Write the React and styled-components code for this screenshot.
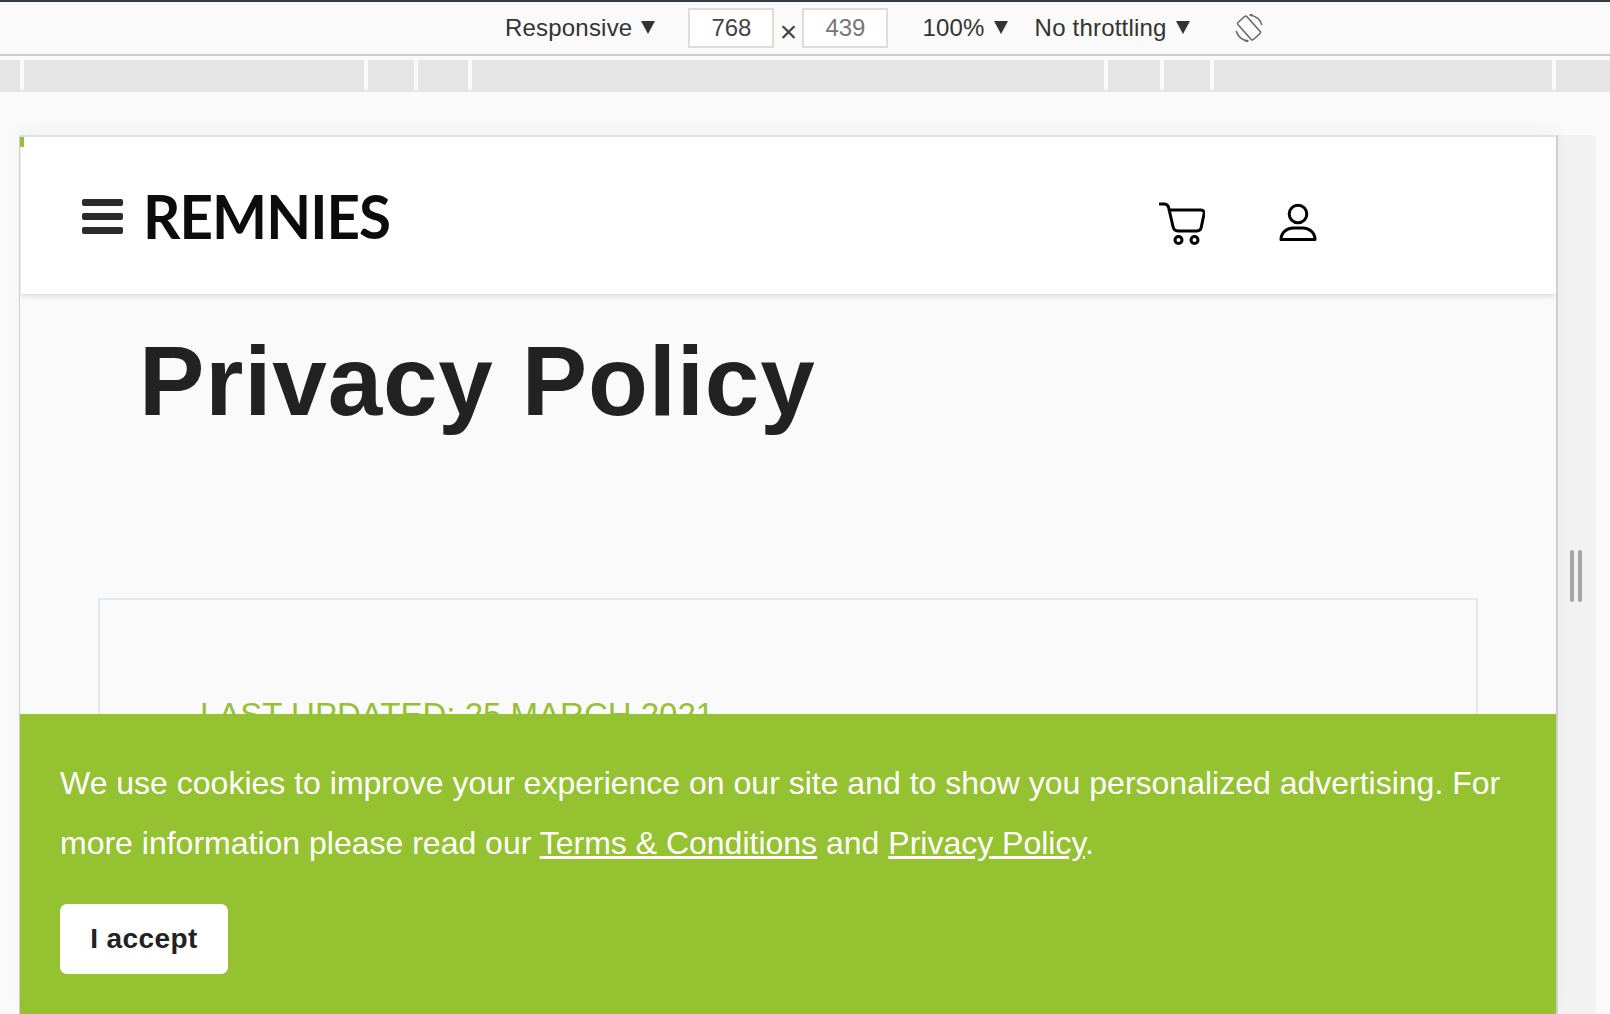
import styled, { createGlobalStyle } from "styled-components";

const GlobalStyle = createGlobalStyle`
  html, body {
    margin: 0;
    padding: 0;
    height: 100%;
    overflow: hidden;
    background: #fafafa;
    font-family: "Liberation Sans", Arial, sans-serif;
  }
`;

const Page = styled.div`
  height: 1014px;
  overflow: hidden;
  background: #fafafa;
  border-top: 2px solid #2f3c46;
  box-sizing: border-box;
`;

const Toolbar = styled.div`
  height: 52px;
  display: flex;
  align-items: center;
  padding-left: 505px;
  border-bottom: 2px solid #cccccc;
  box-sizing: content-box;
  color: #333;
  font-size: 24px;
`;

const Select = styled.div`
  display: flex;
  align-items: center;
  gap: 9px;
  margin-left: ${(props) => props.$before}px;
  margin-right: ${(props) => props.$gap}px;
  white-space: nowrap;
  letter-spacing: 0.2px;
`;

const Caret = styled.span`
  width: 0;
  height: 0;
  border-left: 7px solid transparent;
  border-right: 7px solid transparent;
  border-top: 13px solid #333;
  margin-top: -1px;
`;

const SizeInput = styled.div`
  width: 82px;
  height: 36px;
  border: 2px solid #dddddd;
  background: #fff;
  color: ${(props) => props.$color};
  display: flex;
  align-items: center;
  justify-content: center;
  font-size: 24px;
`;

const Times = styled.span`
  width: 28px;
  text-align: center;
  font-size: 30px;
  line-height: 1;
  color: #444;
  margin-top: 8px;
`;

const Ruler = styled.div`
  height: 32px;
  margin-top: 4px;
  display: flex;
  background: #e5e5e5;
`;

const RulerTick = styled.span`
  width: 4px;
  height: 30px;
  background: #fafafa;
  margin-left: ${(props) => props.$offset}px;
`;

const Stage = styled.div`
  display: flex;
  margin-top: 43px;
  padding-left: 19px;
  height: 879px;
`;

const Frame = styled.div`
  position: relative;
  width: 1539px;
  flex: none;
  overflow: hidden;
  background: #fafafa;
  border-top: 2px solid #dde2e6;
  border-left: 1px solid #cfcfcf;
  border-right: 2px solid #cfcfcf;
  box-sizing: border-box;
  box-shadow: 0 -8px 18px rgba(0, 0, 0, 0.03);
`;

const CornerMark = styled.span`
  position: absolute;
  top: 0;
  left: 0;
  z-index: 2;
  width: 4px;
  height: 10px;
  background: #95c231;
`;

const Track = styled.div`
  width: 38px;
  flex: none;
  background: #f2f2f2;
  display: flex;
  gap: 4px;
  padding: 415px 0 0 12px;
  box-sizing: border-box;
`;

const Grip = styled.span`
  width: 4px;
  height: 52px;
  border-radius: 2px;
  background: #a6a6a6;
`;

const Nav = styled.header`
  height: 157px;
  margin-left: 1px;
  background: #fff;
  display: flex;
  align-items: center;
  padding: 0 239px 0 61px;
  box-shadow: 0 2px 5px rgba(0, 0, 0, 0.14);
  position: relative;
`;

const Burger = styled.div`
  display: flex;
  flex-direction: column;
  gap: 7px;
  width: 41px;
  margin-top: 1px;
`;

const BurgerBar = styled.span`
  height: 7px;
  border-radius: 2px;
  background: #2b2b2b;
`;

const Logo = styled.div`
  margin-left: 20px;
  margin-top: -2px;
  font-family: Lato, sans-serif;
  font-weight: 700;
  font-size: 62px;
  line-height: 1;
  color: #0c0c0c;
  letter-spacing: -1px;
  transform: scaleX(0.94);
  transform-origin: left center;
`;

const NavIcons = styled.div`
  margin-left: auto;
  display: flex;
  align-items: flex-start;
  gap: 74px;
  margin-top: 17px;
`;

const Title = styled.h1`
  margin: 31px 0 0 119px;
  font-size: 98px;
  line-height: 113px;
  font-weight: 700;
  color: #222;
  letter-spacing: 0.85px;
`;

const Card = styled.section`
  width: 1380px;
  height: 300px;
  margin: 160px 0 0 78px;
  border: 2px solid #e3e8ec;
  box-sizing: border-box;
  padding: 96px 0 0 100px;
`;

const Updated = styled.div`
  font-size: 33px;
  line-height: 37px;
  color: #95c231;
  white-space: nowrap;
`;

const CookieBar = styled.div`
  position: absolute;
  left: 0;
  right: 0;
  top: 577px;
  bottom: 0;
  background: #95c231;
  padding: 39px 40px 0 40px;
  color: #fff;
  font-size: 32px;
  line-height: 60px;
`;

const CookieText = styled.p`
  margin: 0;
`;

const CookieLink = styled.a`
  color: #fff;
  text-decoration: underline;
`;

const AcceptButton = styled.button`
  display: block;
  width: 168px;
  height: 70px;
  margin-top: 31px;
  border: 0;
  border-radius: 7px;
  background: #fff;
  color: #222;
  font-family: "Liberation Sans", Arial, sans-serif;
  font-size: 28px;
  font-weight: 700;
  letter-spacing: 0.4px;
`;

const CartIcon = () => (
  <svg width="46" height="44" viewBox="0 0 46 44" fill="none" stroke="#000" strokeWidth="3" strokeLinecap="round" strokeLinejoin="round">
    <path d="M1 2h4c2.500 0 4 1 4.600 3.500L14 24.500C14.600 27.500 16 29 19 29h19c2.200 0 3.600-1 4.200-3.500L45 12c.500-2.500-.500-4-3-4H10" />
    <circle cx="19.500" cy="38" r="3.500" />
    <circle cx="35.500" cy="38" r="3.500" />
  </svg>
);

const UserIcon = () => (
  <svg width="38" height="39" viewBox="0 -1 38 39" fill="none" stroke="#000" strokeWidth="3" strokeLinejoin="round">
    <circle cx="19" cy="11" r="8.800" />
    <path d="M2 36.500c0-7 6-11.500 12-11.500h10c6 0 12 4.500 12 11.500z" />
  </svg>
);

const RotateIcon = () => (
  <svg width="28" height="28" viewBox="0 0 28 28" fill="none" stroke="#666" strokeWidth="1.500" style={{ marginLeft: 45 }}>
    <rect x="8" y="2.500" width="12" height="23" rx="1.500" transform="rotate(-42 14 14)" />
    <path d="M15 1.200C20.500 1.500 25.500 5.500 26.800 11M13 26.800C7.500 26.500 2.500 22.500 1.200 17" />
    <path d="M14.500 1.200l3-1.200M13.500 26.800l-3 1.200" />
  </svg>
);

const App = () => (
  <Page>
    <GlobalStyle />
    <Toolbar>
      <Select $before={0} $gap={33}>
        Responsive <Caret />
      </Select>
      <SizeInput $color="#444">768</SizeInput>
      <Times>×</Times>
      <SizeInput $color="#777">439</SizeInput>
      <Select $before={34} $gap={27}>
        100% <Caret />
      </Select>
      <Select $before={0} $gap={0}>
        No throttling <Caret />
      </Select>
      <RotateIcon />
    </Toolbar>
    <Ruler>
      <RulerTick $offset={20} />
      <RulerTick $offset={340} />
      <RulerTick $offset={46} />
      <RulerTick $offset={50} />
      <RulerTick $offset={632} />
      <RulerTick $offset={52} />
      <RulerTick $offset={46} />
      <RulerTick $offset={338} />
    </Ruler>
    <Stage>
      <Frame>
        <CornerMark />
        <Nav>
          <Burger>
            <BurgerBar />
            <BurgerBar />
            <BurgerBar />
          </Burger>
          <Logo>REMNIES</Logo>
          <NavIcons>
            <CartIcon />
            <UserIcon />
          </NavIcons>
        </Nav>
        <Title>Privacy Policy</Title>
        <Card>
          <Updated>LAST UPDATED: 25 MARCH 2021</Updated>
        </Card>
        <CookieBar>
          <CookieText>
            We use cookies to improve your experience on our site and to show you personalized advertising. For more
            information please read our <CookieLink>Terms &amp; Conditions</CookieLink> and{" "}
            <CookieLink>Privacy Policy</CookieLink>.
          </CookieText>
          <AcceptButton>I accept</AcceptButton>
        </CookieBar>
      </Frame>
      <Track>
        <Grip />
        <Grip />
      </Track>
    </Stage>
  </Page>
);

export default App;
